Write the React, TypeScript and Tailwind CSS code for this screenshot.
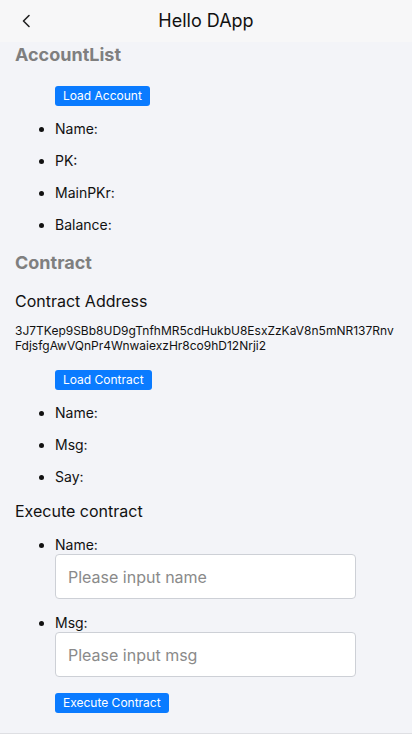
export default function App() {
  const font = { fontFamily: 'Inter, "Noto Sans", sans-serif' };
  return (
    <div className="w-[412px] h-[735px] bg-[#f3f4f8] text-[#111] flex flex-col overflow-hidden" style={font}>
      {/* Nav bar */}
      <div className="h-[42px] shrink-0 bg-[#f7f7f8] flex items-center relative">
        <button className="w-[42px] h-[42px] flex items-center justify-center pl-[12px]">
          <svg width="12" height="14" viewBox="0 0 12 14" fill="none" stroke="#222" strokeWidth="1.6" strokeLinecap="round" strokeLinejoin="round">
            <path d="M8 1.5L2.5 7L8 12.5" />
          </svg>
        </button>
        <div className="absolute left-0 right-0 text-center text-[18px] leading-[42px] pointer-events-none">Hello DApp</div>
      </div>

      <div className="flex-1 flex flex-col px-[15px]">
        {/* Account */}
        <h3 className="text-[18px] leading-[26px] font-bold text-[#7f7f7f]">AccountList</h3>
        <div className="flex pl-[40px] mt-[18px]">
          <button className="h-[20px] px-[8px] rounded-[3px] bg-[#0a7bff] text-white text-[12px] leading-[20px]">Load Account</button>
        </div>
        <ul className="list-disc pl-[40px] mt-[7px] text-[14px]">
          {['Name:', 'PK:', 'MainPKr:', 'Balance:'].map((t) => (
            <li key={t} className="h-[32px] leading-[32px]">{t}</li>
          ))}
        </ul>

        {/* Contract */}
        <h3 className="mt-[9px] text-[18px] leading-[26px] font-bold text-[#7f7f7f]">Contract</h3>
        <div className="mt-[13px] text-[16px] leading-[24px]">Contract Address</div>
        <div className="mt-[10px] text-[12px] leading-[15px] break-all">
          3J7TKep9SBb8UD9gTnfhMR5cdHukbU8EsxZzKaV8n5mNR137RnvFdjsfgAwVQnPr4WnwaiexzHr8co9hD12Nrji2
        </div>
        <div className="flex pl-[40px] mt-[17px]">
          <button className="h-[20px] px-[8px] rounded-[3px] bg-[#0a7bff] text-white text-[12px] leading-[20px]">Load Contract</button>
        </div>
        <ul className="list-disc pl-[40px] mt-[7px] text-[14px]">
          {['Name:', 'Msg:', 'Say:'].map((t) => (
            <li key={t} className="h-[32px] leading-[32px]">{t}</li>
          ))}
        </ul>

        {/* Execute */}
        <div className="mt-[6px] text-[16px] leading-[24px]">Execute contract</div>
        <ul className="list-disc pl-[40px] mt-[13px] text-[14px] flex flex-col gap-[15px]">
          <li className="leading-[18px]">
            Name:
            <input
              className="block w-[301px] h-[45px] rounded-[4px] border border-[#cdd0d6] bg-white px-[12px] text-[16px] placeholder:text-[#8a8a8a] outline-none"
              placeholder="Please input name"
            />
          </li>
          <li className="leading-[18px]">
            Msg:
            <input
              className="block w-[301px] h-[45px] rounded-[4px] border border-[#cdd0d6] bg-white px-[12px] text-[16px] placeholder:text-[#8a8a8a] outline-none"
              placeholder="Please input msg"
            />
          </li>
        </ul>
        <div className="flex pl-[40px] mt-[16px]">
          <button className="h-[20px] px-[8px] rounded-[3px] bg-[#0a7bff] text-white text-[12px] leading-[20px]">Execute Contract</button>
        </div>
      </div>
      <div className="h-[2px] shrink-0 border-t border-[#dedfe3] bg-white" />
    </div>
  );
}
